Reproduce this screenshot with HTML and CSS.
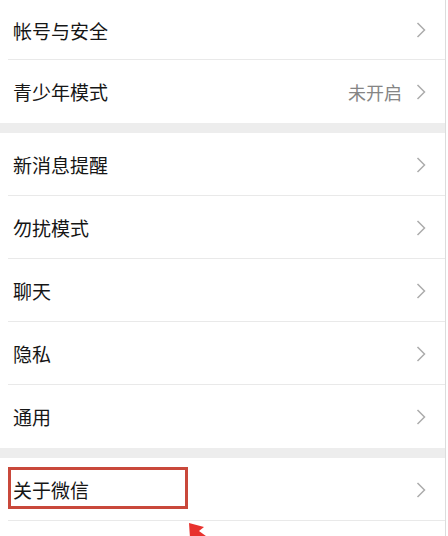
FILE: index.html
```html
<!DOCTYPE html>
<html lang="zh-CN">
<head>
<meta charset="utf-8">
<title>设置</title>
<link rel="stylesheet" href="styles.css">
</head>
<body>
<div class="page">
  <div class="group">
    <div class="row first"><span class="label">帐号与安全</span><svg class="chev" width="10" height="16" viewBox="0 0 10 16"><polyline points="1.5,1 8.5,8 1.5,15" fill="none" stroke="#acacac" stroke-width="1.5"/></svg></div>
    <div class="row last"><span class="label">青少年模式</span><span class="value">未开启</span><svg class="chev" width="10" height="16" viewBox="0 0 10 16"><polyline points="1.5,1 8.5,8 1.5,15" fill="none" stroke="#acacac" stroke-width="1.5"/></svg></div>
  </div>
  <div class="gap"></div>
  <div class="group">
    <div class="row"><span class="label">新消息提醒</span><svg class="chev" width="10" height="16" viewBox="0 0 10 16"><polyline points="1.5,1 8.5,8 1.5,15" fill="none" stroke="#acacac" stroke-width="1.5"/></svg></div>
    <div class="row"><span class="label">勿扰模式</span><svg class="chev" width="10" height="16" viewBox="0 0 10 16"><polyline points="1.5,1 8.5,8 1.5,15" fill="none" stroke="#acacac" stroke-width="1.5"/></svg></div>
    <div class="row"><span class="label">聊天</span><svg class="chev" width="10" height="16" viewBox="0 0 10 16"><polyline points="1.5,1 8.5,8 1.5,15" fill="none" stroke="#acacac" stroke-width="1.5"/></svg></div>
    <div class="row"><span class="label">隐私</span><svg class="chev" width="10" height="16" viewBox="0 0 10 16"><polyline points="1.5,1 8.5,8 1.5,15" fill="none" stroke="#acacac" stroke-width="1.5"/></svg></div>
    <div class="row last"><span class="label">通用</span><svg class="chev" width="10" height="16" viewBox="0 0 10 16"><polyline points="1.5,1 8.5,8 1.5,15" fill="none" stroke="#acacac" stroke-width="1.5"/></svg></div>
  </div>
  <div class="gap"></div>
  <div class="group">
    <div class="row"><span class="label">关于微信</span><svg class="chev" width="10" height="16" viewBox="0 0 10 16"><polyline points="1.5,1 8.5,8 1.5,15" fill="none" stroke="#acacac" stroke-width="1.5"/></svg>
      <div class="highlight"></div>
      <svg class="arrow" width="60" height="40" viewBox="0 0 60 40">
        <polygon points="1,1 16,5 11,9 40,30 34,40 6,17 2,16" fill="#e8322e"/>
      </svg>
    </div>
    <div class="row last"></div>
  </div>
</div>
</body>
</html>
```
FILE: styles.css
```css
html, body {
  margin: 0;
  padding: 0;
  background: #ffffff;
}
body {
  width: 448px;
  height: 536px;
  overflow: hidden;
  font-family: "Noto Sans CJK SC", "Noto Sans", sans-serif;
}
.page {
  width: 445px;
  height: 536px;
  border-right: 1px solid #dcdcdc;
  background: #ffffff;
  overflow: hidden;
}
.gap {
  height: 10px;
  background: #ededed;
}
.row {
  position: relative;
  box-sizing: border-box;
  height: 63px;
  display: flex;
  align-items: center;
  padding: 0 19px 0 13px;
}
.row::after {
  content: "";
  position: absolute;
  left: 8px;
  right: 0;
  bottom: 0;
  height: 1px;
  background: #e9e9e9;
}
.row.first {
  height: 60px;
}
.row.last::after {
  display: none;
}
.label {
  flex: 1;
  font-size: 19px;
  color: #161616;
  line-height: 1;
}
.value {
  font-size: 18px;
  color: #858585;
  margin-right: 14px;
  line-height: 1;
}
.chev {
  display: block;
}
.highlight {
  position: absolute;
  left: 8px;
  top: 9px;
  width: 174px;
  height: 36px;
  border: 3px solid #c9483b;
}
.arrow {
  position: absolute;
  left: 188px;
  top: 64px;
}
```
